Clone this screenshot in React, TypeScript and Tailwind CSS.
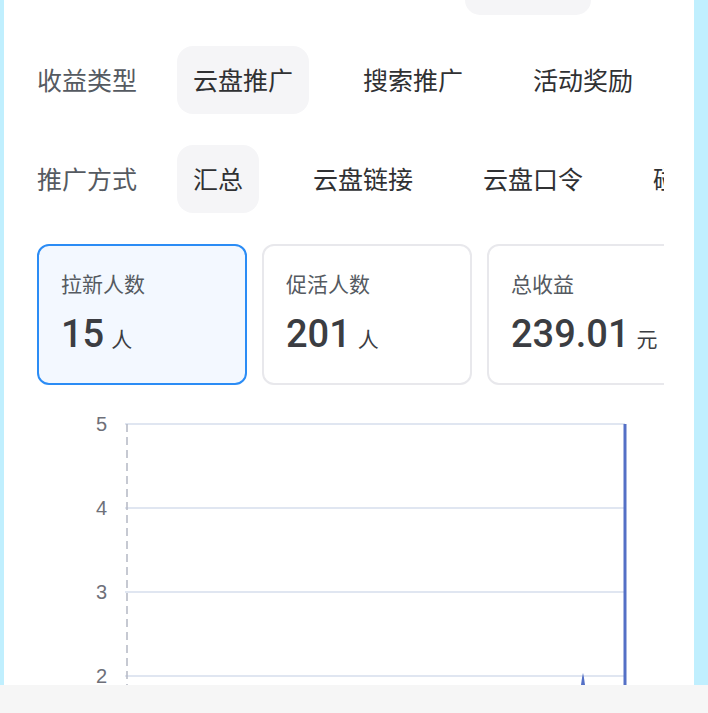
import React from "react";

type FilterRow = {
  label: string;
  options: string[];
  active: number;
};

const rows: FilterRow[] = [
  { label: "收益类型", options: ["云盘推广", "搜索推广", "活动奖励"], active: 0 },
  { label: "推广方式", options: ["汇总", "云盘链接", "云盘口令", "碰一碰"], active: 0 },
];

const stats = [
  { title: "拉新人数", value: "15", unit: "人", active: true },
  { title: "促活人数", value: "201", unit: "人", active: false },
  { title: "总收益", value: "239.01", unit: "元", active: false },
];

const font = "font-['Liberation_Sans','Noto_Sans_CJK_SC',sans-serif]";

function Filter({ row }: { row: FilterRow }) {
  return (
    <div className="flex h-[68px] shrink-0 items-center pt-[4px]">
      <span className="w-[140px] shrink-0 text-[25px] text-[#555a61]">{row.label}</span>
      <div className="flex items-center gap-[38px] whitespace-nowrap">
        {row.options.map((opt, i) => (
          <span
            key={opt}
            className={[
              "-mt-[4px] flex h-[68px] items-center rounded-[16px] px-[16px] pt-[4px] text-[25px] text-[#303133]",
              i === row.active ? "bg-[#f5f5f7]" : "",
            ].join(" ")}
          >
            {opt}
          </span>
        ))}
      </div>
    </div>
  );
}

function Chart() {
  const ticks = [
    { v: "5", y: 39 },
    { v: "4", y: 123 },
    { v: "3", y: 207 },
    { v: "2", y: 291 },
  ];
  return (
    <svg width="627" height="300" className="shrink-0" viewBox="0 0 627 300">
      {ticks.map((t) => (
        <g key={t.v}>
          <line x1="88" x2="588" y1={t.y} y2={t.y} stroke="#e0e6f1" strokeWidth="2" />
          <text
            x="70"
            y={t.y + 7}
            textAnchor="end"
            fontSize="20"
            fill="#6e7079"
            fontFamily="Liberation Sans, sans-serif"
          >
            {t.v}
          </text>
        </g>
      ))}
      <line x1="90" x2="90" y1="39" y2="300" stroke="#b4b8c4" strokeWidth="1.5" strokeDasharray="8 5" />
      <line x1="588" x2="588" y1="39" y2="300" stroke="#5470c6" strokeWidth="3" />
      <path d="M544 300 Q545.5 289 546 288 Q546.5 289 548 300 Z" fill="#5470c6" />
    </svg>
  );
}

export default function App() {
  return (
    <div className={`flex h-[713px] w-[708px] flex-col overflow-hidden bg-[#c0effe] ${font}`}>
      <div className="flex h-[685px] shrink-0 overflow-hidden">
        <div className="w-[4px] shrink-0" />
        <div className="flex w-[690px] shrink-0 flex-col overflow-hidden bg-white pl-[33px] pr-[30px]">
          <div className="flex h-[15px] shrink-0">
            <div className="ml-[428px] h-[15px] w-[126px] rounded-b-[16px] bg-[#f5f5f7]" />
          </div>
          <div className="mt-[31px] flex flex-col gap-[31px] overflow-hidden">
            {rows.map((r) => (
              <Filter key={r.label} row={r} />
            ))}
          </div>
          <div className="mt-[31px] flex shrink-0 gap-[15px] overflow-hidden">
            {stats.map((s) => (
              <div
                key={s.title}
                className={[
                  "flex h-[141px] w-[210px] shrink-0 flex-col rounded-[12px] border-2 pl-[22px] pt-[24px]",
                  s.active ? "border-[#2b8cf5] bg-[#f3f8ff]" : "border-[#e8e8ec] bg-white",
                ].join(" ")}
              >
                <span className="text-[21px] leading-[30px] text-[#555a61]">{s.title}</span>
                <div className="mt-[12px] flex items-baseline gap-[7px] whitespace-nowrap">
                  <span className="font-['Roboto','Liberation_Sans',sans-serif] text-[38px] font-medium leading-[44px] text-[#3b3d42]">
                    {s.value}
                  </span>
                  <span className="text-[21px] text-[#3b3d42]">{s.unit}</span>
                </div>
              </div>
            ))}
          </div>
          <Chart />
        </div>
        <div className="w-[14px] shrink-0" />
      </div>
      <div className="h-[28px] shrink-0 bg-[#f6f6f6]" />
    </div>
  );
}
